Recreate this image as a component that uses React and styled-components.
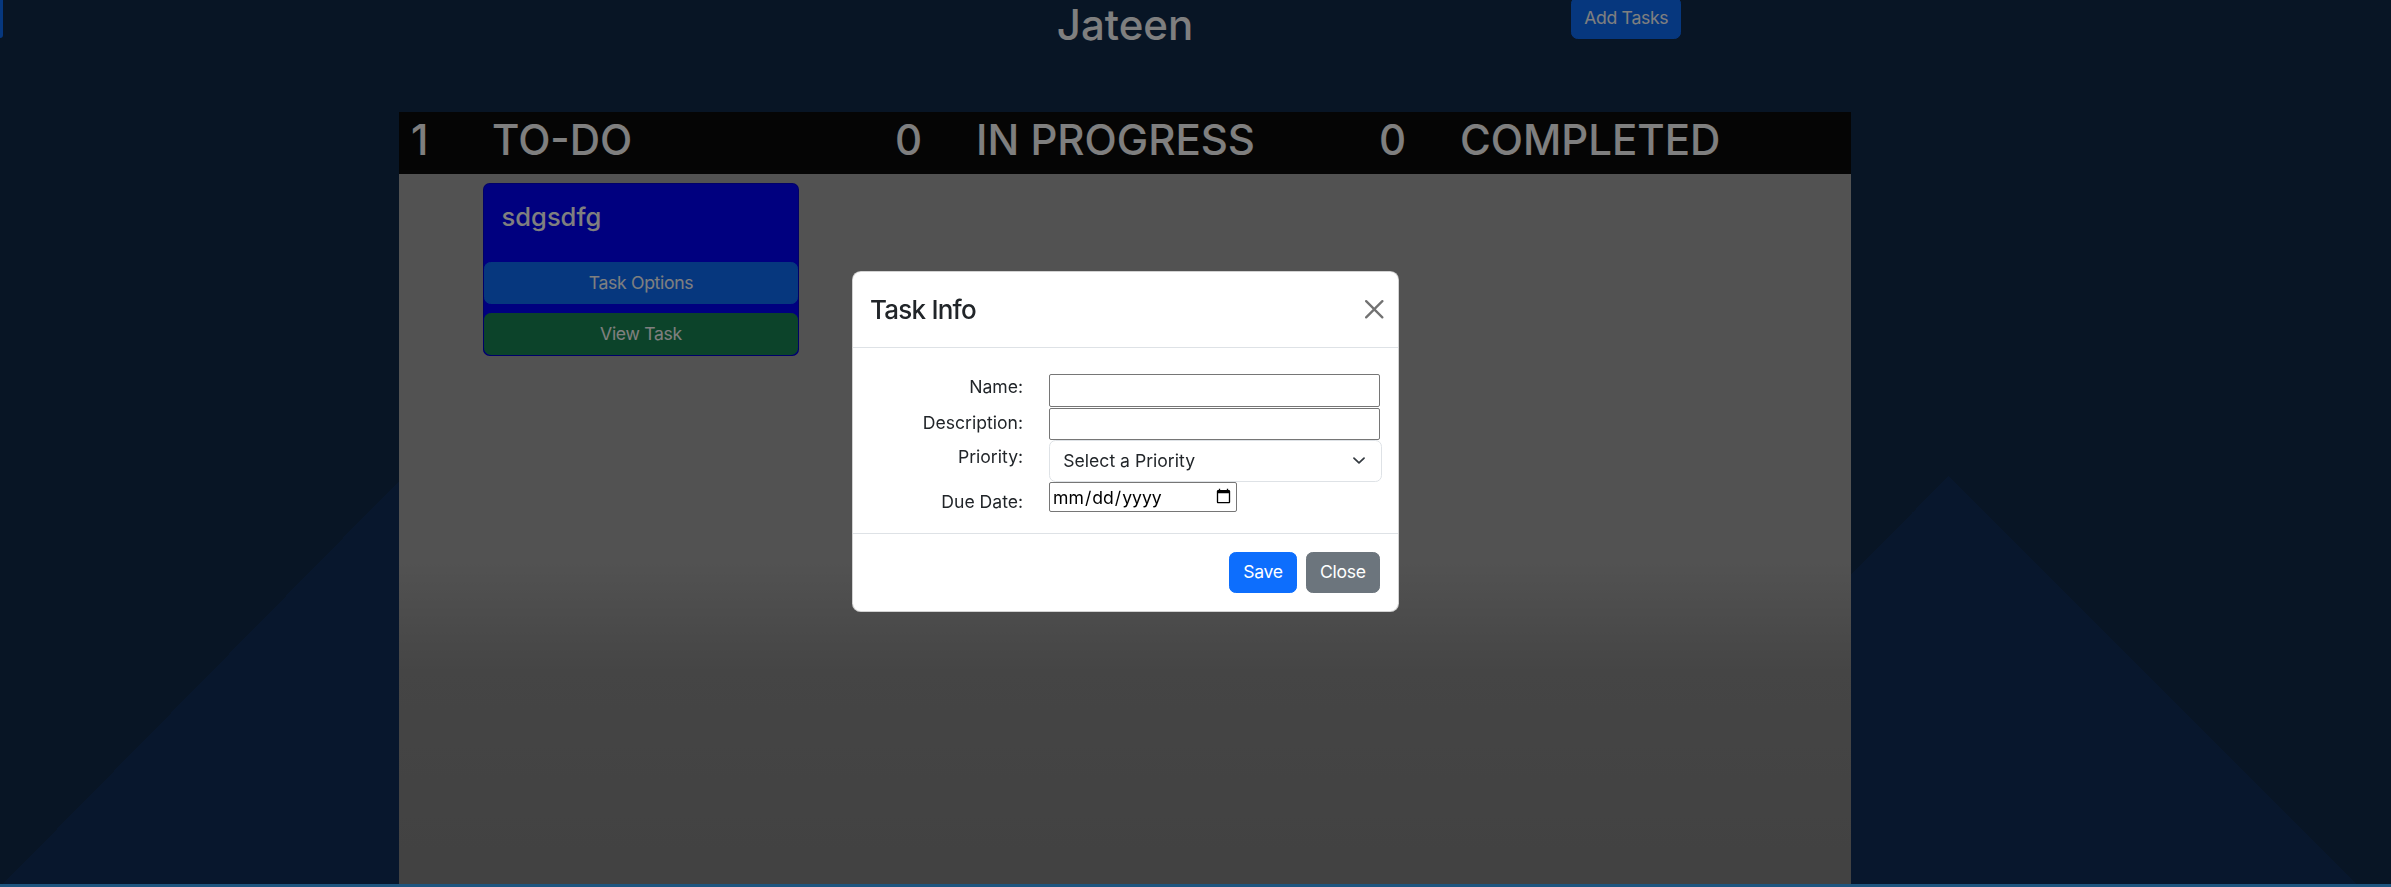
import React from "react";
import styled, { createGlobalStyle } from "styled-components";

const GlobalStyle = createGlobalStyle`
  html, body {
    margin: 0;
    padding: 0;
  }
  body {
    font-family: Inter, "Noto Sans", sans-serif;
    background: #102a4c;
    overflow: hidden;
  }
  *, *::before, *::after {
    box-sizing: border-box;
  }
`;

const colors = {
  primary: "#0d6efd",
  success: "#198754",
  secondary: "#6c757d",
};

const chevron =
  "data:image/svg+xml,%3csvg xmlns='http://www.w3.org/2000/svg' viewBox='0 0 16 16'%3e%3cpath fill='none' stroke='%23343a40' stroke-linecap='round' stroke-linejoin='round' stroke-width='2' d='m2 5 6 6 6-6'/%3e%3c/svg%3e";

const Page = styled.div`
  width: 2391px;
  height: 887px;
  overflow: hidden;
  display: flex;
  flex-direction: column;
  background:
    conic-gradient(from 135deg at 1949px 476px, #102e5a 0deg 90deg, transparent 90deg 360deg) no-repeat,
    linear-gradient(to top left, #102e5a 50%, transparent 50%) 0 480px / 400px 407px no-repeat,
    #102a4b;
`;

const Content = styled.div`
  width: 2250px;
  flex: 1;
  min-height: 0;
  display: flex;
  flex-direction: column;
`;

const TopBar = styled.header`
  height: 112px;
  flex-shrink: 0;
  display: grid;
  grid-template-columns: 1fr auto 1fr;
  align-items: start;
`;

const EdgeTab = styled.div`
  width: 3px;
  height: 38px;
  background: ${colors.primary};
  border-bottom-right-radius: 4px;
`;

const AppTitle = styled.h1`
  margin: 0;
  font-size: 42px;
  font-weight: 500;
  line-height: 50px;
  color: #fff;
`;

const Button = styled.button`
  font-family: Inter, "Noto Sans", sans-serif;
  font-size: 17.6px;
  line-height: 26.4px;
  letter-spacing: -0.3px;
  padding: 6.6px 13.2px;
  border: 1px solid ${(p) => colors[p.$variant]};
  border-radius: 6.6px;
  background: ${(p) => colors[p.$variant]};
  color: #fff;
  cursor: pointer;
`;

const AddButton = styled(Button)`
  justify-self: start;
  width: 110px;
  padding: 6.6px 0;
  margin: -2.6px 0 0 378px;
`;

const Board = styled.main`
  width: 1452px;
  margin: 0 auto;
  flex: 1;
  display: flex;
  flex-direction: column;
`;

const BoardHead = styled.div`
  height: 62px;
  flex-shrink: 0;
  background: #0a0a0a;
  display: grid;
  grid-template-columns: repeat(3, 1fr);
`;

const HeadCell = styled.div`
  display: flex;
  padding-left: 12px;
  font-size: 42px;
  font-weight: 500;
  line-height: 56px;
  color: #fff;
`;

const Count = styled.span`
  width: 81px;
`;

const BoardBody = styled.div`
  flex: 1;
  display: grid;
  grid-template-columns: repeat(3, 1fr);
  align-items: start;
  background: linear-gradient(to bottom, #a4a4a4 0, #a4a4a4 390px, #8a8a8a 500px, #848484 100%);
`;

const Column = styled.section`
  display: flex;
  flex-direction: column;
  align-items: center;
  padding-top: 9px;
`;

const Card = styled.div`
  width: 316px;
  display: flex;
  flex-direction: column;
  background: #0000ff;
  border: 1px solid rgba(0, 0, 0, 0.175);
  border-radius: 6.6px;
  overflow: hidden;
`;

const CardTitle = styled.h4`
  margin: 0;
  height: 78px;
  padding: 17.6px;
  font-size: 25.5px;
  font-weight: 500;
  line-height: 30px;
  color: #fff;
`;

const CardButton = styled(Button)`
  width: 100%;
  height: 42px;
  padding: 0;
  margin-top: ${(p) => p.$gap || 0}px;
`;

const BottomStrip = styled.div`
  height: 3px;
  flex-shrink: 0;
  background: #3caaff;
`;

const Backdrop = styled.div`
  position: fixed;
  inset: 0;
  background: rgba(0, 0, 0, 0.5);
`;

const ModalLayer = styled.div`
  position: fixed;
  inset: 0;
  display: flex;
  align-items: center;
  justify-content: center;
  padding: 0 141px 4px 0;
`;

const Dialog = styled.div`
  width: 547px;
  display: flex;
  flex-direction: column;
  background: #fff;
  color: #212529;
  border: 1px solid rgba(0, 0, 0, 0.175);
  border-radius: 8.8px;
`;

const ModalHeader = styled.div`
  display: flex;
  align-items: center;
  justify-content: space-between;
  padding: 17.6px;
  border-bottom: 1px solid #dee2e6;
`;

const ModalTitle = styled.h4`
  margin: 0;
  font-size: 26px;
  font-weight: 500;
  line-height: 39.6px;
  letter-spacing: -0.8px;
`;

const CloseButton = styled.button`
  display: flex;
  padding: 0;
  margin-right: -3.6px;
  border: 0;
  background: transparent;
  opacity: 0.55;
  cursor: pointer;
`;

const ModalBody = styled.div`
  padding: 17.6px;
`;

const Form = styled.form`
  display: grid;
  grid-template-columns: 153px 333px;
  grid-template-rows: 33px 33px 41px 31px;
  column-gap: 26px;
  align-items: start;
  padding: 8.5px 0 3.4px;
`;

const Label = styled.label`
  padding-top: ${(p) => p.$offset || 0}px;
  text-align: right;
  font-size: 17.6px;
  line-height: 26.4px;
`;

const TextInput = styled.input`
  width: 331px;
  height: ${(p) => p.$h}px;
  margin-top: ${(p) => p.$top || 0}px;
  padding: 1px 2px;
  font-family: Inter, "Noto Sans", sans-serif;
  font-size: 17.6px;
  border: 1px solid #767676;
  border-radius: 2px;
  background: #fff;
`;

const PrioritySelect = styled.select`
  width: 100%;
  height: 41.6px;
  padding: 6.6px 39.6px 6.6px 13.2px;
  font-family: Inter, "Noto Sans", sans-serif;
  font-size: 17.6px;
  line-height: 26.4px;
  color: #212529;
  appearance: none;
  background: #fff url("${chevron}") no-repeat right 13.2px center / 17.6px 13.2px;
  border: 1px solid #dee2e6;
  border-radius: 6.6px;
`;

const DateInput = styled.input`
  width: 188px;
  height: 30px;
  margin-top: 1px;
  padding: 1px 2px;
  font-family: Inter, "Noto Sans", sans-serif;
  font-size: 17.6px;
  color: #000;
  border: 1px solid #767676;
  border-radius: 2px;
  background: #fff;
`;

const ModalFooter = styled.div`
  display: flex;
  justify-content: flex-end;
  gap: 8.8px;
  padding: 17.6px;
  border-top: 1px solid #dee2e6;
`;

const columns = [
  { count: 1, title: "TO-DO" },
  { count: 0, title: "IN PROGRESS" },
  { count: 0, title: "COMPLETED" },
];

function CloseIcon() {
  return (
    <svg width="18.5" height="18.5" viewBox="0 0 16 16" aria-hidden="true">
      <path
        fill="#000"
        d="M.293.293a1 1 0 0 1 1.414 0L8 6.586 14.293.293a1 1 0 1 1 1.414 1.414L9.414 8l6.293 6.293a1 1 0 0 1-1.414 1.414L8 9.414l-6.293 6.293a1 1 0 0 1-1.414-1.414L6.586 8 .293 1.707a1 1 0 0 1 0-1.414z"
      />
    </svg>
  );
}

export default function App() {
  return (
    <>
      <GlobalStyle />
      <Page>
        <Content>
          <TopBar>
            <EdgeTab />
            <AppTitle>Jateen</AppTitle>
            <AddButton $variant="primary">Add Tasks</AddButton>
          </TopBar>
          <Board>
            <BoardHead>
              {columns.map((c) => (
                <HeadCell key={c.title}>
                  <Count>{c.count}</Count>
                  <span>{c.title}</span>
                </HeadCell>
              ))}
            </BoardHead>
            <BoardBody>
              <Column>
                <Card>
                  <CardTitle>sdgsdfg</CardTitle>
                  <CardButton $variant="primary">Task Options</CardButton>
                  <CardButton $variant="success" $gap={9}>View Task</CardButton>
                </Card>
              </Column>
              <Column />
              <Column />
            </BoardBody>
          </Board>
        </Content>
        <BottomStrip />
      </Page>
      <Backdrop />
      <ModalLayer>
        <Dialog role="dialog">
          <ModalHeader>
            <ModalTitle>Task Info</ModalTitle>
            <CloseButton aria-label="Close">
              <CloseIcon />
            </CloseButton>
          </ModalHeader>
          <ModalBody>
            <Form>
              <Label htmlFor="name">Name:</Label>
              <TextInput id="name" type="text" $h={33} />
              <Label htmlFor="desc" $offset={2.7}>Description:</Label>
              <TextInput id="desc" type="text" $h={32} $top={1} />
              <Label htmlFor="priority" $offset={4.4}>Priority:</Label>
              <PrioritySelect id="priority" defaultValue="">
                <option value="">Select a Priority</option>
                <option value="low">Low</option>
                <option value="medium">Medium</option>
                <option value="high">High</option>
              </PrioritySelect>
              <Label htmlFor="due" $offset={7.7}>Due Date:</Label>
              <DateInput id="due" type="date" />
            </Form>
          </ModalBody>
          <ModalFooter>
            <Button $variant="primary">Save</Button>
            <Button $variant="secondary">Close</Button>
          </ModalFooter>
        </Dialog>
      </ModalLayer>
    </>
  );
}
